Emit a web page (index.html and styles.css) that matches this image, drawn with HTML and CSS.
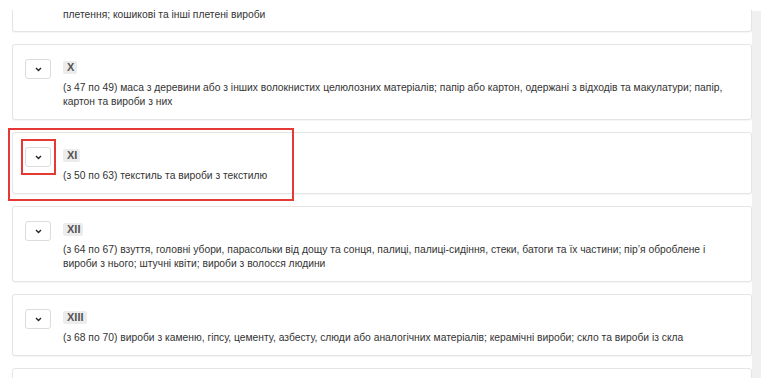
FILE: index.html
```html
<!DOCTYPE html>
<html lang="uk">
<head>
<meta charset="utf-8">
<link rel="stylesheet" href="styles.css">
</head>
<body>
<div class="viewport">
  <div class="list">
    <div class="card card-partial">
      <div class="desc">плетення; кошикові та інші плетені вироби</div>
    </div>

    <div class="card">
      <button class="toggle"><svg viewBox="0 0 8 6" width="7" height="5"><path d="M1 1.2 L4 4.2 L7 1.2" fill="none" stroke="#222" stroke-width="1.6"/></svg></button>
      <div class="body">
        <span class="badge">X</span>
        <div class="desc">(з 47 по 49) маса з деревини або з інших волокнистих целюлозних матеріалів; папір або картон, одержані з відходів та макулатури; папір, картон та вироби з них</div>
      </div>
    </div>

    <div class="card highlighted">
      <button class="toggle"><svg viewBox="0 0 8 6" width="7" height="5"><path d="M1 1.2 L4 4.2 L7 1.2" fill="none" stroke="#222" stroke-width="1.6"/></svg><span class="mark-btn"></span></button>
      <div class="body">
        <span class="badge">XI</span>
        <div class="desc">(з 50 по 63) текстиль та вироби з текстилю</div>
      </div>
      <span class="mark-card"></span>
    </div>

    <div class="card">
      <button class="toggle"><svg viewBox="0 0 8 6" width="7" height="5"><path d="M1 1.2 L4 4.2 L7 1.2" fill="none" stroke="#222" stroke-width="1.6"/></svg></button>
      <div class="body">
        <span class="badge">XII</span>
        <div class="desc">(з 64 по 67) взуття, головні убори, парасольки від дощу та сонця, палиці, палиці-сидіння, стеки, батоги та їх частини; пір’я оброблене і вироби з нього; штучні квіти; вироби з волосся людини</div>
      </div>
    </div>

    <div class="card">
      <button class="toggle"><svg viewBox="0 0 8 6" width="7" height="5"><path d="M1 1.2 L4 4.2 L7 1.2" fill="none" stroke="#222" stroke-width="1.6"/></svg></button>
      <div class="body">
        <span class="badge">XIII</span>
        <div class="desc">(з 68 по 70) вироби з каменю, гіпсу, цементу, азбесту, слюди або аналогічних матеріалів; керамічні вироби; скло та вироби із скла</div>
      </div>
    </div>

    <div class="card">
      <button class="toggle"><svg viewBox="0 0 8 6" width="7" height="5"><path d="M1 1.2 L4 4.2 L7 1.2" fill="none" stroke="#222" stroke-width="1.6"/></svg></button>
      <div class="body">
        <span class="badge">XIV</span>
        <div class="desc">(з 71 по 71) перли природні або культивовані, дорогоцінне або напівдорогоцінне каміння</div>
      </div>
    </div>
  </div>
  <div class="track"></div>
</div>
</body>
</html>
```

FILE: styles.css
```css
* { box-sizing: border-box; }
html, body { margin: 0; padding: 0; background: #fff; }
body {
  font-family: "Liberation Sans", Arial, sans-serif;
  font-size: 10.3px;
  color: #333;
}
.viewport {
  display: flex;
  align-items: stretch;
  height: 372px;
  margin-top: 10px;
  padding-left: 12px;
  overflow: hidden;
}
.list {
  width: 740px;
  display: flex;
  flex-direction: column;
  gap: 12px;
}
.track {
  width: 9px;
  margin-top: 1px;
  background: #f0f0f0;
}
.card {
  position: relative;
  display: flex;
  gap: 12px;
  background: #fff;
  border: 1px solid #e4e4e4;
  border-radius: 3px;
  box-shadow: 0 1px 1px rgba(0,0,0,0.04);
  padding: 14px 12px 10px 12px;
  flex-shrink: 0;
}
.card-partial {
  border-top: none;
  border-radius: 0 0 3px 3px;
  padding: 0 12px 9px 50px;
  margin-top: -1px;
}
.card-partial .desc { margin-top: -1px; }
.toggle {
  position: relative;
  width: 26px;
  height: 20px;
  flex-shrink: 0;
  display: flex;
  align-items: center;
  justify-content: center;
  padding: 0;
  background: #fff;
  border: 1px solid #dcdcdc;
  border-radius: 3px;
}
.body { flex: 1; min-width: 0; padding-top: 2px; }
.badge {
  display: inline-block;
  height: 13px;
  line-height: 13px;
  padding: 0 3px 0 4px;
  background: #ececec;
  border-radius: 2px;
  color: #555;
  font-size: 11px;
  font-weight: bold;
  vertical-align: top;
}
.desc {
  margin-top: 7px;
  line-height: 14px;
  color: #333;
}
.mark-card {
  position: absolute;
  left: -5px;
  top: -5px;
  width: 286px;
  height: 73px;
  border: 2px solid #e53935;
  pointer-events: none;
}
.mark-btn {
  position: absolute;
  left: -5px;
  top: -9px;
  width: 35px;
  height: 36px;
  border: 2px solid #e53935;
}
```
